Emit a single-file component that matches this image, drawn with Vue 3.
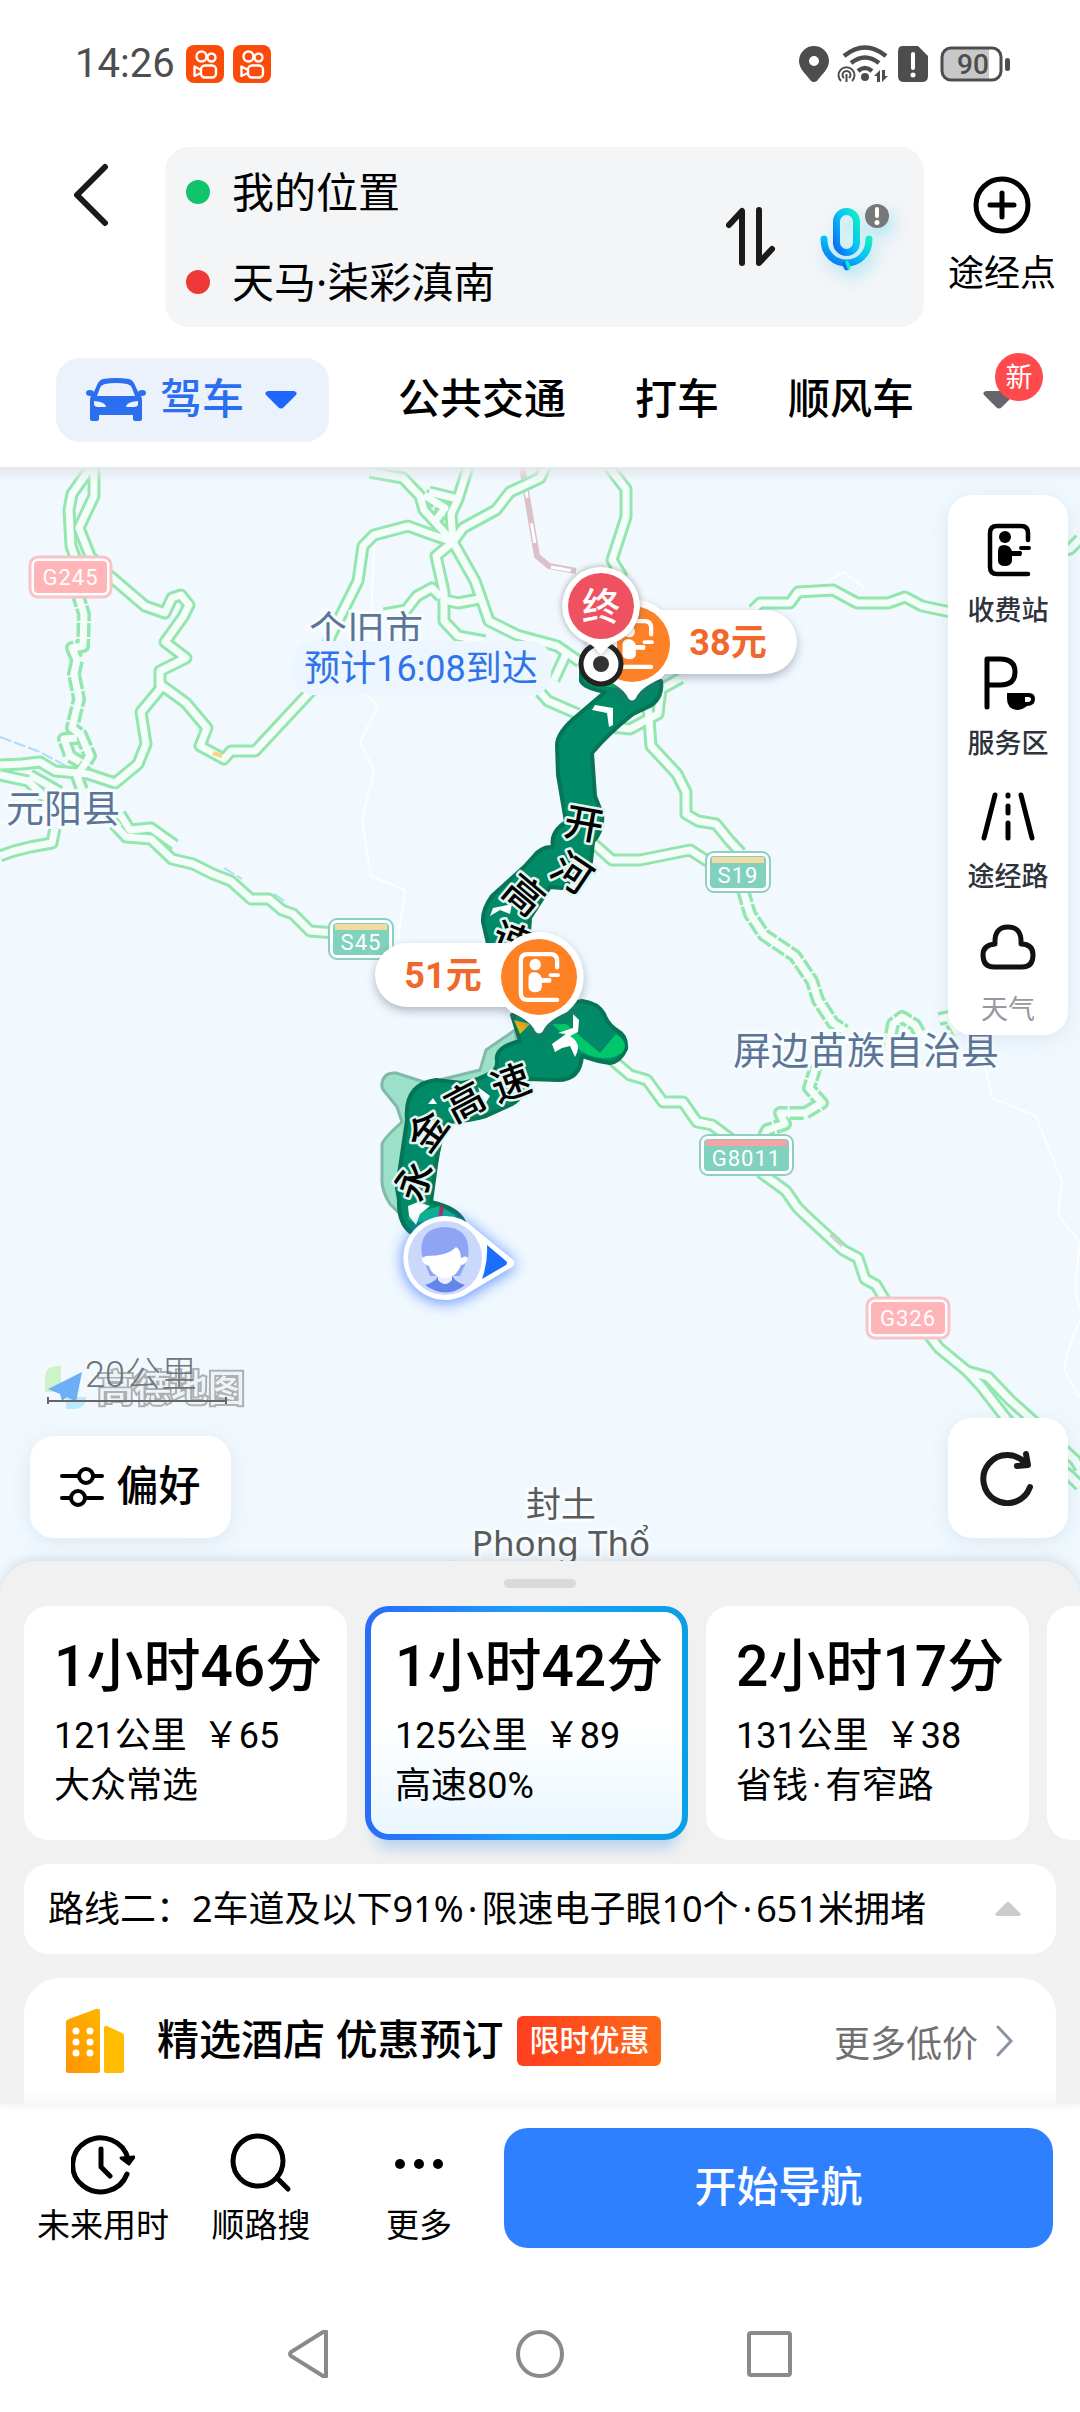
<template>
  <div class="page">
    <header class="top">
      <div class="status">
        <span class="clock">14:26</span>
        <svg v-for="n in 2" :key="n" class="app-badge" viewBox="0 0 38 38">
          <rect width="38" height="38" rx="8" fill="#fb4b0b" />
          <g fill="none" stroke="#fff" stroke-width="2.4">
            <circle cx="15.5" cy="11.5" r="5" />
            <circle cx="25.5" cy="12.5" r="4" />
            <rect x="15" y="20.500" width="15" height="12" rx="4" />
            <path d="M15 25 L8.500 21.500 V31 L15 28" stroke-linejoin="round" />
          </g>
        </svg>
        <svg class="system" viewBox="0 0 214 38">
          <g fill="#4d4d4d">
            <path fill-rule="evenodd" d="M16 1 A15 15 0 0 1 31 16 C31 24 24 29 19 36 Q16 38 13 36 C8 29 1 24 1 16 A15 15 0 0 1 16 1 Z M16 11 A5 5 0 1 0 16 21 A5 5 0 1 0 16 11 Z" />
            <circle cx="67" cy="32" r="4" />
            <path d="M104 1 H120 L130 11 V31 Q130 37 124 37 H106 Q100 37 100 31 V7 Q100 1 104 1 Z" />
            <rect x="207" y="13" width="5" height="13" rx="2.500" />
            <path d="M76 31 L82 25 V37 H79 V31 Z M84 25 H87 V31 H90 L84 37 Z" />
          </g>
          <g fill="none" stroke="#4d4d4d" stroke-width="4.500">
            <path d="M46 11 Q67 -6 88 11" />
            <path d="M53 18 Q67 7 81 18" />
            <path d="M60 26 Q67 20 74 26" />
          </g>
          <g fill="none" stroke="#4d4d4d" stroke-width="2">
            <path d="M43 36 A8 8 0 1 1 54 36" />
            <path d="M46 33 A4 4 0 1 1 51 33" />
            <path d="M48.500 29 V37" />
          </g>
          <path d="M115 9 V23" stroke="#fff" stroke-width="4" stroke-linecap="round" />
          <circle cx="115" cy="30" r="2.500" fill="#fff" />
          <rect x="144" y="3" width="59" height="32" rx="9" fill="#fff" />
          <path d="M151 4 H191 V34 H151 Q144 34 144 27 V11 Q144 4 151 4 Z" fill="#c8c8c8" />
          <rect x="144" y="3" width="59" height="32" rx="9" fill="none" stroke="#4d4d4d" stroke-width="3" />
          <text x="175" y="29" class="battery">90</text>
        </svg>
      </div>

      <div class="search-row">
        <button class="back" aria-label="返回">
          <svg viewBox="0 0 36 64"><path d="M32 4 L4 32 L32 60" fill="none" stroke="#1a1a1a" stroke-width="6" stroke-linecap="round" stroke-linejoin="round" /></svg>
        </button>
        <div class="search-box">
          <div class="fields">
            <label class="field">
              <span class="dot start"></span>
              <input v-model="from" type="text" aria-label="起点" />
            </label>
            <label class="field">
              <span class="dot end"></span>
              <input v-model="to" type="text" aria-label="终点" />
            </label>
          </div>
          <button class="swap" aria-label="交换起终点" @click="swap">
            <svg viewBox="0 0 50 60"><path d="M3 18 L16 4 V56 M33 3 V56 L46 42" fill="none" stroke="#1a1a1a" stroke-width="6" stroke-linecap="round" stroke-linejoin="round" /></svg>
          </button>
          <button class="mic" aria-label="语音">
            <svg viewBox="0 -4 72 80">
              <defs>
                <linearGradient id="mic" x1="0" y1="1" x2="1" y2="0">
                  <stop offset="0" stop-color="#0a6cf5" />
                  <stop offset=".55" stop-color="#05c4f5" />
                  <stop offset="1" stop-color="#12eec2" />
                </linearGradient>
              </defs>
              <g fill="none" stroke="url(#mic)" stroke-width="7" stroke-linecap="round">
                <rect x="16.500" y="10.500" width="20" height="41" rx="10" />
                <path d="M4 38 C4 70 49 70 49 38" />
                <path d="M26 63 L27 66" />
              </g>
              <circle cx="57" cy="15" r="12" fill="#777" />
              <path d="M57 8 V15" stroke="#fff" stroke-width="4" stroke-linecap="round" />
              <circle cx="57" cy="21.500" r="2.500" fill="#fff" />
            </svg>
          </button>
        </div>
        <button class="via">
          <svg viewBox="0 0 60 60" fill="none" stroke="#000" stroke-width="5" stroke-linecap="round">
            <circle cx="30" cy="30" r="26" />
            <path d="M18 30 H42 M30 18 V42" />
          </svg>
          <span>途经点</span>
        </button>
      </div>

      <nav class="tabs">
        <button class="tab active">
          <svg class="car" viewBox="0 0 60 44">
            <path fill="#2b6ff0" fill-rule="evenodd" d="M17 1 Q30 -1 43 1 Q47 2 49 7 L53 16 Q56 18 56 22 V41 Q56 43 54 43 H49 Q47 43 47 41 V37 H13 V41 Q13 43 11 43 H6 Q4 43 4 41 V22 Q4 18 7 16 L11 7 Q13 2 17 1 Z M19 6 Q15 7 14 10 L11 18 H49 L46 10 Q45 7 41 6 Q30 4 19 6 Z M8 23 V26 Q8 29 12 29 H20 Q20 24 8 23 Z M52 23 Q40 24 40 29 H48 Q52 29 52 26 Z" />
            <ellipse cx="4" cy="15" rx="4" ry="3" fill="#2b6ff0" />
            <ellipse cx="56" cy="15" rx="4" ry="3" fill="#2b6ff0" />
          </svg>
          <span>驾车</span>
          <svg class="caret" viewBox="0 0 32 18"><path d="M3 0 H29 Q33 1 31 4 L19 16 Q16 19 13 16 L1 4 Q-1 1 3 0 Z" fill="#1f66ff" /></svg>
        </button>
        <button v-for="tab in tabs" :key="tab" class="tab">{{ tab }}</button>
        <button class="tab more-tabs" aria-label="更多方式">
          <svg class="caret" viewBox="0 0 32 18"><path d="M3 0 H29 Q33 1 31 4 L19 16 Q16 19 13 16 L1 4 Q-1 1 3 0 Z" fill="#65656c" /></svg>
          <span class="new">新</span>
        </button>
      </nav>
    </header>

    <main class="map">
      <svg class="canvas" viewBox="0 467 1080 1130" preserveAspectRatio="xMidYMin slice">
        <defs>
          <symbol id="toll" viewBox="0 0 44 54">
            <path d="M41 17 V10 Q41 3 34 3 H10 Q3 3 3 10 V44 Q3 51 10 51 H41" fill="none" stroke="currentColor" stroke-width="4.500" stroke-linecap="round" />
            <circle cx="18" cy="14" r="6" fill="currentColor" />
            <path d="M17 22 Q23 22 25 28 H34 Q36 30 34 33 H25 V38 Q24 43 18 43 Q11 43 11 37 V28 Q11 22 17 22 Z" fill="currentColor" />
            <path d="M34 25 H42" stroke="currentColor" stroke-width="4" stroke-linecap="round" />
          </symbol>
          <linearGradient id="header-shade" x1="0" y1="0" x2="0" y2="1">
            <stop offset="0" stop-color="#e3e8ec" />
            <stop offset="1" stop-color="#e3e8ec" stop-opacity="0" />
          </linearGradient>
        </defs>
        <rect y="467" width="1080" height="1130" fill="#f1f9ff" />

        <g fill="none" stroke="#fff" stroke-width="2" opacity=".8">
          <path d="M374 540 L372 600 L368 640 M362 690 L378 706 L360 742 L374 770 L362 820 L371 876 L405 890 L398 940" />
          <path d="M986 1070 L992 1098 L1036 1116 L1062 1182 L1058 1215 L1080 1242 L1075 1290 L1080 1310 M1080 1320 L1068 1350 L1064 1370 L1080 1398" />
          <path d="M826 582 L844 572 L864 588" />
        </g>
        <path d="M0 737 L40 752 L66 766 M224 868 L242 879 M274 894 L286 902" fill="none" stroke="#b2daf7" stroke-width="2" stroke-dasharray="12 3" />
        <path d="M522 467 L537 556 L549 566 L576 571" fill="none" stroke="#dcc0ca" stroke-width="6" />
        <path d="M524 478 L537 556 M551 567 L574 571" fill="none" stroke="#fff" stroke-width="3" stroke-dasharray="20 26" />

        <g class="road casing"><path v-for="d in roads" :key="d" :d="d" /></g>
        <g class="road casing winding"><path v-for="d in windingRoads" :key="d" :d="d" /></g>
        <g class="road core"><path v-for="d in roads.concat(windingRoads)" :key="d" :d="d" /></g>
        <path d="M213 753 L222 756" stroke="#f7d487" stroke-width="4" />
        <path d="M830 1235 L842 1246" stroke="#d4cfd2" stroke-width="3" />

        <g class="place" text-anchor="middle">
          <text x="366" y="643">个旧市</text>
          <text x="63" y="822">元阳县</text>
          <text x="866" y="1064">屏边苗族自治县</text>
        </g>
        <g class="place foreign" text-anchor="middle">
          <text x="561" y="1517">封土</text>
          <text x="561" y="1556">Phong Thổ</text>
        </g>
        <path d="M434 1569 L446 1565 L452 1562" stroke="#8be0a7" stroke-width="4" fill="none" />

        <g v-for="sign in signs" :key="sign.name" :class="['sign', sign.kind]">
          <rect class="plate" :x="sign.x" :y="sign.y" :width="sign.w" height="40" rx="8" />
          <rect class="rim" :x="sign.x + 4" :y="sign.y + 4" :width="sign.w - 8" height="32" rx="4" />
          <rect v-if="sign.kind !== 'national'" class="band" :x="sign.x + 6" :y="sign.y + 5" :width="sign.w - 12" height="6" />
          <text :x="sign.x + sign.w / 2" :y="sign.y + (sign.kind === 'national' ? 28 : 31)" text-anchor="middle">{{ sign.name }}</text>
        </g>

        <path class="alt-route" d="M382 1083 Q384 1072 396 1073 L427 1083 L480 1070 L486 1050 L515 1030 L520 1060 L440 1130 L400 1214 L390 1204 Q381 1190 382 1178 V1144 Q384 1138 402 1122 L397 1107 L385 1092 Q381 1088 382 1083 Z" />
        <path class="route" d="M581 671 L581 681 Q584 688 605 692 L578 715 Q557 732 557 745 L558 775 L566 822 Q550 832 553 847 Q542 846 534 856 L524 867 L492 896 Q482 910 483 922 L489 948 H528 L530 918 L550 887 L562 888 L591 862 L593 842 Q604 830 602 814 L595 796 L592 753 Q610 732 633 714 L650 706 Q663 698 661 681 Z" />
        <path class="route" d="M512 1015 L582 1001 Q598 1003 604 1014 Q608 1025 618 1031 Q627 1036 626 1049 Q620 1062 610 1063 Q598 1062 582 1056 Q580 1080 558 1080 L527 1079 Q524 1100 508 1106 L486 1116 Q470 1121 447 1122 Q440 1138 436 1165 L431 1202 Q458 1208 464 1222 L470 1240 L410 1232 Q398 1222 399 1200 L397 1188 L407 1120 Q404 1084 436 1080 L462 1083 Q480 1080 490 1073 Q498 1070 497 1060 Q495 1047 520 1041 Z" />
        <path d="M514 1020 L530 1024 L520 1034 Z" fill="#e6b414" />
        <path d="M552 1024 L566 1024 L600 1053 L616 1034 Q630 1043 622 1053 Q606 1064 582 1052 Z" fill="#00c76b" />
        <path d="M584 680 L600 686 L618 688 L600 676 Z" fill="#04c454" />
        <path d="M407 1218 L420 1212 L440 1206 L456 1216 L452 1222 H412 Z" fill="#07b982" />
        <path d="M442 1206 L440 1218" stroke="#b5265f" stroke-width="4" />
        <g fill="#fff">
          <path d="M595 705 L613 708 L613 725 L609 727 L607 713 L592 710 Z" />
          <path d="M573 1014 L579 1020 L578 1032 L570 1036 Q583 1044 575 1057 L570 1046 L562 1048 L555 1052 L552 1044 L566 1034 L558 1033 L573 1028 Z" />
          <path d="M408 1206 L418 1202 L430 1206 L420 1214 L416 1225 L409 1216 Z" />
          <path d="M493 908 L512 904 L510 914 L500 910 L490 916 Z" />
          <path d="M478 1087 L490 1096 L484 1106 Z" />
          <path d="M428 1104 L437 1104 L433 1098 Z" />
        </g>

        <g class="road-name">
          <text
            v-for="(c, i) in roadName"
            :key="i"
            :transform="`translate(${c.x} ${c.y}) rotate(${c.angle})`"
            text-anchor="middle"
            dy="14"
          >{{ c.char }}</text>
        </g>

        <g class="eta">
          <rect x="293" y="641" width="258" height="54" rx="20" />
          <text x="421" y="681" text-anchor="middle">预计16:08到达</text>
        </g>

        <g class="bubble">
          <rect x="604" y="610" width="193" height="64" rx="32" />
          <path d="M632 599 A45 45 0 0 1 660 679 Q640 688 636 698 Q632 703 628 698 Q624 688 604 679 A45 45 0 0 1 632 599 Z" />
        </g>
        <circle cx="632" cy="644" r="38" fill="#fe8126" />
        <use href="#toll" x="612" y="618" width="42" height="52" class="toll-glyph" />
        <text x="728" y="655" text-anchor="middle" class="fee">38元</text>

        <g class="bubble">
          <rect x="375" y="943" width="180" height="64" rx="32" />
          <path d="M539 932 A45 45 0 0 1 567 1012 Q547 1021 543 1031 Q539 1036 535 1031 Q531 1021 511 1012 A45 45 0 0 1 539 932 Z" />
        </g>
        <circle cx="539" cy="977" r="38" fill="#fe8126" />
        <use href="#toll" x="518" y="951" width="42" height="52" class="toll-glyph" />
        <text x="443" y="988" text-anchor="middle" class="fee">51元</text>

        <circle cx="601" cy="664" r="20" fill="#fff" stroke="#222" stroke-width="5" />
        <circle cx="601" cy="664" r="8" fill="#333" />
        <path class="pin" d="M601 567 A39 39 0 0 1 620 640 Q608 645 604 652 Q601 656 598 652 Q594 645 582 640 A39 39 0 0 1 601 567 Z" />
        <circle cx="601" cy="606" r="33" fill="#ee5261" />
        <text x="601" y="620" text-anchor="middle" class="pin-text">终</text>

        <g class="me">
          <path d="M445 1216 Q462 1216 474 1228 L512 1259 Q517 1263 512 1267 L470 1292 A42 42 0 1 1 445 1216 Z" />
        </g>
        <path d="M487 1245 L506 1261 Q508 1263 506 1265 L482 1279 Q488 1262 487 1245 Z" fill="#1b6dfb" />
        <circle cx="445" cy="1258" r="37" fill="#cad8fb" />
        <path d="M422 1255 Q418 1228 445 1227 Q472 1228 468 1258 L460 1276 H430 Z" fill="#8fa4f5" />
        <path d="M425 1285 Q440 1280 438 1273 H452 Q452 1281 465 1285 Q446 1300 425 1285 Z" fill="#6486e8" />
        <path d="M438 1270 H452 V1280 Q445 1288 438 1280 Z" fill="#e8effe" />
        <path d="M426 1256 Q448 1256 456 1247 Q461 1250 461 1258 Q466 1255 468 1258 Q466 1265 461 1265 Q456 1278 445 1278 Q432 1277 429 1266 Q422 1264 422 1258 Z" fill="#fff" />

        <g opacity=".65">
          <path d="M58 1366 H61 V1392 H45 V1378 Q45 1366 58 1366 Z" fill="#bdf0ab" />
          <path d="M66 1397 H86 Q86 1409 74 1409 H66 Z" fill="#a2e1ff" />
          <path d="M82 1372 L48 1389 L60 1394 L62 1401 L67 1397 L76 1402 Z" fill="#2688f0" />
        </g>
        <text x="97" y="1402" class="watermark">高德地图</text>
        <text x="85" y="1387" class="scale">20公里</text>
        <path d="M48 1397 V1404 M48 1401 H226 M226 1397 V1404" stroke="#666" stroke-width="2" />
        <rect y="467" width="1080" height="16" fill="url(#header-shade)" />
      </svg>

      <div class="tools">
        <button class="tool">
          <svg viewBox="0 0 56 56"><use href="#toll" x="7" y="1" width="44" height="54" /></svg>
          <span>收费站</span>
        </button>
        <button class="tool">
          <svg viewBox="0 0 56 56">
            <path d="M7 52 V4 H20 Q35 4 35 17 Q35 30 20 30 H7" fill="none" stroke="#000" stroke-width="5" stroke-linecap="round" stroke-linejoin="round" />
            <path fill-rule="evenodd" d="M27 38 H49 Q55 38 55 44 Q55 51 47 51 Q42 55 37 55 Q27 54 27 44 Z M45 42 V47 H48 Q51 47 51 44 Q51 42 48 42 Z" />
          </svg>
          <span>服务区</span>
        </button>
        <button class="tool">
          <svg viewBox="0 0 56 56" fill="none" stroke="#000" stroke-width="5" stroke-linecap="round">
            <path d="M15 7 L4 50 M41 7 L52 50 M28 7 V8 M28 18 V25 M28 35 V50" />
          </svg>
          <span>途经路</span>
        </button>
        <button class="tool faded">
          <svg viewBox="0 2 56 56">
            <path d="M15 25 Q14 8 28 8 Q42 8 41 25 Q53 25 53 36 Q53 48 42 48 H14 Q3 48 3 36 Q3 26 15 25 Z" fill="none" stroke="#111" stroke-width="5" stroke-linejoin="round" />
          </svg>
          <span>天气</span>
        </button>
      </div>

      <button class="prefer">
        <svg viewBox="0 0 44 42" fill="none" stroke="#000" stroke-width="4" stroke-linecap="round">
          <path d="M2 10 H18 M34 10 H42 M2 32 H10 M26 32 H42" />
          <circle cx="26" cy="10" r="7" />
          <circle cx="18" cy="32" r="7" />
        </svg>
        <span>偏好</span>
      </button>
      <button class="refresh" aria-label="刷新">
        <svg viewBox="0 0 56 56" fill="none" stroke="#1a1a1a" stroke-width="6" stroke-linecap="round" stroke-linejoin="round">
          <path d="M50 37 A24 24 0 1 1 46 14 M46 4 L48 15 L37 16" />
        </svg>
      </button>
    </main>

    <section class="sheet">
      <div class="handle"></div>
      <div class="routes">
        <button
          v-for="(route, i) in routes"
          :key="i"
          :class="['card', { selected: i === selected }]"
          :aria-label="route.time ? null : '更多路线'"
          @click="selected = i"
        >
          <strong>{{ route.time }}</strong>
          <span class="cost">
            <span>{{ route.distance }}</span>
            <span>{{ route.toll }}</span>
          </span>
          <span>
            <template v-for="(note, j) in route.notes" :key="note"><i v-if="j" class="sep">·</i>{{ note }}</template>
          </span>
        </button>
      </div>
      <button class="summary">
        <span>路线二：<template v-for="(fact, j) in facts" :key="fact"><i v-if="j" class="sep">·</i>{{ fact }}</template></span>
        <svg viewBox="0 0 26 14"><path d="M2 14 Q-1 13 1 11 L11 1 Q13 -1 15 1 L25 11 Q27 13 24 14 Z" fill="#ccc" /></svg>
      </button>
      <div class="hotel">
        <svg class="building" viewBox="0 0 58 66">
          <defs>
            <linearGradient id="tower" x1="1" y1="0" x2="0" y2="1">
              <stop offset="0" stop-color="#ffb400" />
              <stop offset="1" stop-color="#ff9500" />
            </linearGradient>
          </defs>
          <path d="M3 11 L30 1 Q34 0 34 3 V63 Q34 65 32 65 H3 Q0 65 0 63 V14 Q0 12 3 11 Z" fill="url(#tower)" />
          <path d="M38 20 Q38 17 41 18 L56 25 Q58 26 58 28 V63 Q58 65 56 65 H40 Q38 65 38 63 Z" fill="#ffbc00" />
          <g fill="#fff">
            <circle v-for="n in 6" :key="n" :cx="n % 2 ? 10 : 24" :cy="23 + Math.floor((n - 1) / 2) * 11" r="3.500" />
          </g>
        </svg>
        <h2>精选酒店 优惠预订</h2>
        <span class="tag">限时优惠</span>
        <a href="#">
          更多低价
          <svg viewBox="0 0 18 32"><path d="M2 2 L15 16 L2 30" fill="none" stroke="#8a94a3" stroke-width="3" stroke-linecap="round" /></svg>
        </a>
      </div>
    </section>

    <footer class="bottom">
      <div class="actions">
        <button class="action">
          <svg viewBox="0 0 64 64" fill="none" stroke="#000" stroke-width="5" stroke-linecap="round" stroke-linejoin="round">
            <path d="M56 42 A28 27 0 1 1 57 27 M30 17 V35 L39 44" />
            <path d="M50 26 L58 32 L63 25 Z" fill="#000" stroke-width="3" />
          </svg>
          <span>未来用时</span>
        </button>
        <button class="action">
          <svg viewBox="0 0 64 64" fill="none" stroke="#000" stroke-width="5" stroke-linecap="round">
            <circle cx="29" cy="29" r="25" />
            <path d="M48 46 L59 57" />
          </svg>
          <span>顺路搜</span>
        </button>
        <button class="action">
          <svg viewBox="0 0 64 64"><circle cx="13" cy="32" r="5" /><circle cx="32" cy="32" r="5" /><circle cx="51" cy="32" r="5" /></svg>
          <span>更多</span>
        </button>
        <button class="start-nav">开始导航</button>
      </div>
      <div class="system-nav">
        <svg viewBox="0 0 48 48"><path d="M40 2 V46 Q40 48 37 46 L5 26 Q3 24 5 22 L37 2 Q40 0 40 2 Z" /></svg>
        <svg viewBox="0 0 48 48"><circle cx="24" cy="24" r="22" /></svg>
        <svg viewBox="0 0 48 48"><rect x="3" y="3" width="41" height="42" rx="2" /></svg>
      </div>
    </footer>
  </div>
</template>

<script setup>
import { ref } from 'vue'

const from = ref('我的位置')
const to = ref('天马·柒彩滇南')
const selected = ref(1)

const swap = () => {
  const start = from.value
  from.value = to.value
  to.value = start
}

const tabs = ['公共交通', '打车', '顺风车']

const routes = [
  { time: '1小时46分', distance: '121公里', toll: '￥65', notes: ['大众常选'] },
  { time: '1小时42分', distance: '125公里', toll: '￥89', notes: ['高速80%'] },
  { time: '2小时17分', distance: '131公里', toll: '￥38', notes: ['省钱', '有窄路'] },
  { time: '', distance: '', toll: '', notes: [] }
]

const facts = ['2车道及以下91%', '限速电子眼10个', '651米拥堵']

const signs = [
  { name: 'G245', kind: 'national', x: 30, y: 557, w: 81 },
  { name: 'S45', kind: 'province', x: 329, y: 919, w: 64 },
  { name: 'S19', kind: 'province', x: 706, y: 852, w: 64 },
  { name: 'G8011', kind: 'express', x: 700, y: 1135, w: 93 },
  { name: 'G326', kind: 'national', x: 867, y: 1298, w: 82 }
]

const roadName = [
  { char: '开', x: 584, y: 824, angle: 10 },
  { char: '河', x: 572, y: 873, angle: 34 },
  { char: '高', x: 524, y: 895, angle: 40 },
  { char: '速', x: 512, y: 941, angle: 22 },
  { char: '永', x: 414, y: 1181, angle: -72 },
  { char: '金', x: 428, y: 1131, angle: -54 },
  { char: '高', x: 465, y: 1102, angle: -28 },
  { char: '速', x: 511, y: 1083, angle: -20 }
]

const roads = [
  'M91 467 L72 494 L69 510 L71 546 L76 560',
  'M94 467 L94 496 L79 528 L90 556 L110 576 L145 606 L165 613 L172 598 L181 595 L189 605 L183 617 L165 642 L186 658 L160 671 L160 689 L141 712 L146 744 L138 764 L115 783 L88 774 L55 771 L40 762 L22 764 L0 765',
  'M160 684 L186 703 L207 728 L200 746 L224 759 L231 751 L255 751 L310 692 L331 635 L358 581 L363 546 L374 535 L408 526 L427 533 L453 542',
  'M453 542 L424 510 L420 496 L403 478 L370 472',
  'M468 467 L458 499 L429 492 M458 499 L451 514 L453 542',
  'M453 542 L463 528 L496 510 L510 492 L540 478 L545 467',
  'M453 542 L436 556 L444 592 L444 621 L458 636 L485 641',
  'M453 542 L475 581 L489 621 L517 635 L535 640 L557 646 L580 662',
  'M441 599 L458 603 L479 599 M441 597 L432 588 L417 596 L406 610 L384 614',
  'M609 467 L626 489 L626 517 L612 560 L623 578',
  'M753 610 L760 603 L790 603 L798 592 L833 590 L857 603 L888 603 L905 597 L922 606 L960 614',
  'M1060 552 L1070 549 L1080 539',
  'M540 692 L548 701 L578 714 M612 727 L630 729 L658 714 L661 689 L681 678',
  'M554 680 L566 654',
  'M648 706 L651 746 L677 774 L686 792 L686 814 L698 821 L716 824 L729 840 L741 853',
  'M593 843 L612 860 L640 860 L690 850 L712 864',
  'M610 1058 L630 1075 L647 1080 L663 1102 L683 1102 L697 1122 L712 1125 L735 1142',
  'M760 1172 L786 1191 L797 1207 L805 1215 L843 1250 L858 1258 L865 1279 L876 1285 L888 1305 M925 1330 L939 1348 L967 1371 L981 1386 L1005 1417 L1030 1445 L1070 1476 L1080 1486',
  'M967 1371 L988 1377 L1010 1400 L1029 1417 L1075 1460 L1080 1468',
  'M114 824 L126 837 L151 839 L172 859 L193 864 L213 874 L231 881 L251 899 L269 899 L282 910 L293 914 L310 931 L335 933',
  'M120 814 L130 830 L151 828 L175 845',
  'M0 775 L28 781 L48 800 L60 815 M30 775 L60 792',
  'M0 856 L14 851 L30 847 L52 843 L55 828'
]

const windingRoads = [
  'M77 592 L84 614 L83 646 L72 648 L77 660 L74 674 L79 699 L72 728 L81 735 L90 756 L77 776 L82 790',
  'M77 738 L64 739 L70 756 L80 762',
  'M424 495 L445 508 L436 520',
  'M743 890 L750 914 L764 935 L795 956 L812 981 L818 1000 L833 1023 L845 1031',
  'M816 1066 L809 1088 L822 1103 L805 1113 L780 1113 L785 1124 L767 1130 L762 1140',
  'M888 1050 L893 1024 L902 1017 L915 1025 L920 1034 M939 1019 L948 1017 L958 1034'
]
</script>

<style>
body {
  margin: 0;
  background: #fff;
}
</style>

<style scoped>
.page {
  display: flex;
  flex-direction: column;
  min-height: 100vh;
  color: #000;
  background: #fff;
  font-family: Roboto, "Noto Sans CJK SC", sans-serif;
}

button,
input {
  margin: 0;
  padding: 0;
  border: none;
  background: none;
  color: inherit;
  font-family: inherit;
}

button {
  cursor: pointer;
}

svg {
  display: block;
}

.top {
  padding-bottom: 25px;
}

.status {
  display: flex;
  align-items: center;
  gap: 9px;
  height: 38px;
  padding: 45px 68px 0 75px;
}

.clock {
  margin-right: 2px;
  color: #4d4d4d;
  font-size: 40px;
  line-height: 38px;
}

.app-badge {
  width: 38px;
  height: 38px;
}

.system {
  width: 214px;
  height: 38px;
  margin-left: auto;
}

.battery {
  fill: #4d4d4d;
  font-size: 28px;
  font-weight: 500;
  text-anchor: middle;
}

.search-row {
  display: flex;
  align-items: center;
  margin-top: 64px;
}

.back {
  flex: none;
  align-self: flex-start;
  width: 165px;
  height: 96px;
}

.back svg {
  width: 36px;
  height: 64px;
  margin-left: 73px;
}

.search-box {
  display: flex;
  flex: 1;
  align-items: center;
  min-width: 0;
  padding-right: 32px;
  border-radius: 24px;
  background: #f3f5f7;
}

.fields {
  flex: 1;
  min-width: 0;
}

.field {
  display: flex;
  align-items: center;
  gap: 22px;
  height: 90px;
  padding-left: 21px;
}

.field input {
  flex: 1;
  min-width: 0;
  font-family: "Noto Sans", "Noto Sans CJK SC", sans-serif;
  font-size: 42px;
  line-height: 60px;
}

.dot {
  width: 24px;
  height: 24px;
  border-radius: 50%;
}

.dot.start {
  background: #0fc46c;
}

.dot.end {
  background: #f03838;
}

.swap svg {
  width: 50px;
  height: 60px;
}

.mic {
  margin-left: 44px;
}

.mic svg {
  width: 72px;
  height: 80px;
  filter: drop-shadow(4px 8px 8px rgba(0, 190, 240, 0.3));
}

.via {
  display: flex;
  flex: none;
  flex-direction: column;
  align-items: center;
  gap: 14px;
  width: 156px;
  font-size: 36px;
  line-height: 50px;
}

.via svg {
  width: 60px;
  height: 60px;
}

.tabs {
  display: flex;
  align-items: center;
  gap: 69px;
  margin-top: 31px;
  padding-left: 56px;
}

.tab {
  font-size: 42px;
  font-weight: 500;
  line-height: 60px;
  white-space: nowrap;
}

.tab.active {
  display: flex;
  align-items: center;
  gap: 14px;
  height: 84px;
  padding: 0 32px 0 30px;
  border-radius: 24px;
  color: #2b6ff0;
  background: #ecf2fc;
}

.car {
  width: 60px;
  height: 44px;
}

.caret {
  width: 32px;
  height: 18px;
}

.tab.active .caret {
  margin-left: 7px;
}

.more-tabs {
  position: relative;
}

.new {
  position: absolute;
  top: -38px;
  left: 12px;
  width: 48px;
  height: 48px;
  border-radius: 50%;
  color: #fff;
  background: #ff4a4d;
  font-size: 27px;
  font-weight: 400;
  line-height: 50px;
}

.map {
  position: relative;
  flex: 1;
  min-height: 1130px;
}

.canvas {
  position: absolute;
  inset: 0;
  width: 100%;
  height: 100%;
}

.road {
  fill: none;
  stroke-linejoin: round;
}

.casing {
  stroke: #93e6ae;
  stroke-width: 13px;
}

.winding {
  stroke-width: 14px;
  stroke-dasharray: 14px 2px;
}

.core {
  stroke: #f4fdfa;
  stroke-width: 7px;
}

.place {
  fill: #5c7597;
  stroke: #f7fcff;
  stroke-width: 6px;
  paint-order: stroke;
  font-size: 38px;
}

.foreign {
  fill: #5a5a5a;
  font-family: "Noto Sans", "Noto Sans CJK SC", sans-serif;
  font-size: 35px;
}

.sign text {
  fill: #fff;
  font-size: 22px;
  letter-spacing: 1px;
}

.plate {
  fill: #fff;
  stroke: #8fcfc0;
  stroke-width: 2px;
}

.rim {
  fill: #80d1be;
}

.province .band {
  fill: #f1dba3;
}

.express .band {
  fill: #f9a2a6;
}

.national .plate {
  stroke: #f7c3c8;
  stroke-width: 3px;
}

.national .rim {
  fill: #ffb5b7;
}

.route {
  fill: #008a67;
  stroke: #057555;
  stroke-width: 4px;
  stroke-linejoin: round;
}

.alt-route {
  fill: #9be0c8;
  stroke: #83b9a9;
  stroke-width: 3px;
  stroke-linejoin: round;
}

.road-name {
  fill: #000;
  stroke: #e3f5ee;
  stroke-width: 5px;
  stroke-linejoin: round;
  paint-order: stroke;
  font-size: 39px;
  font-weight: 500;
}

.eta rect {
  fill: #edf5fe;
}

.eta text {
  fill: #2f74e8;
  font-size: 36px;
}

.bubble {
  fill: #fff;
  filter: drop-shadow(0 4px 5px rgba(80, 90, 110, 0.4));
}

.toll-glyph {
  color: #fff;
}

.fee {
  fill: #f0682b;
  font-size: 36px;
  font-weight: 700;
}

.pin {
  fill: #fff;
  filter: drop-shadow(0 0 3px rgba(80, 80, 80, 0.5));
}

.pin-text {
  fill: #fff;
  font-size: 38px;
  font-weight: 500;
}

.me {
  fill: #fff;
  filter: drop-shadow(0 2px 8px rgba(50, 110, 255, 0.8));
}

.watermark {
  fill: #eef2f5;
  stroke: #9b9fa3;
  stroke-width: 4px;
  paint-order: stroke;
  font-size: 37px;
  font-weight: 500;
  opacity: 0.8;
}

.scale {
  fill: #70757a;
  font-size: 36px;
  font-weight: 300;
}

.tools {
  position: absolute;
  top: 28px;
  right: 12px;
  display: flex;
  flex-direction: column;
  gap: 28px;
  width: 120px;
  padding: 27px 0 9px;
  border-radius: 24px;
  background: #fff;
  box-shadow: 0 4px 20px rgba(80, 100, 120, 0.12);
}

.tool {
  display: flex;
  flex-direction: column;
  align-items: center;
  gap: 17px;
  color: #000;
  font-size: 27px;
  line-height: 32px;
}

.tool svg {
  width: 56px;
  height: 56px;
}

.tool span {
  color: #2e323b;
  font-weight: 500;
}

.tool.faded span {
  color: #96999f;
  font-weight: 400;
}

.prefer,
.refresh {
  position: absolute;
  bottom: 59px;
  display: flex;
  align-items: center;
  justify-content: center;
  border-radius: 24px;
  background: #fff;
  box-shadow: 0 4px 20px rgba(80, 100, 120, 0.12);
}

.prefer {
  left: 30px;
  gap: 12px;
  width: 201px;
  height: 102px;
  font-size: 42px;
  font-weight: 500;
  line-height: 50px;
}

.prefer svg {
  width: 44px;
  height: 42px;
}

.refresh {
  right: 12px;
  width: 120px;
  height: 120px;
}

.refresh svg {
  width: 56px;
  height: 56px;
}

.sheet {
  position: relative;
  overflow: hidden;
  margin-top: -36px;
  padding: 18px 24px 0;
  border-radius: 36px 36px 0 0;
  background: #f1f1f1;
  box-shadow: 0 -2px 12px rgba(80, 100, 120, 0.2);
}

.handle {
  width: 72px;
  height: 9px;
  margin: 0 auto 18px;
  border-radius: 5px;
  background: #dadada;
}

.routes {
  display: flex;
  gap: 18px;
}

.card {
  display: flex;
  flex: 0 0 323px;
  flex-direction: column;
  box-sizing: border-box;
  height: 234px;
  padding: 20px 0 0 24px;
  border: 6px solid #fff;
  border-radius: 24px;
  background: #fff;
  font-size: 36px;
  line-height: 50px;
  text-align: left;
  white-space: nowrap;
}

.card.selected {
  border-color: transparent;
  background:
    linear-gradient(180deg, #fff 50%, #e9f6fe) padding-box,
    linear-gradient(90deg, #2a6cf7, #1d9efa 50%, #0a9fe6) border-box;
  box-shadow: 0 18px 14px -10px rgba(110, 170, 240, 0.45);
}

.card strong {
  margin-bottom: 9px;
  font-size: 57px;
  font-weight: 500;
  line-height: 70px;
}

.cost {
  display: flex;
  gap: 16px;
}

.sep {
  margin: 0 4px;
  font-style: normal;
}

.summary {
  display: flex;
  align-items: center;
  justify-content: space-between;
  width: 100%;
  height: 90px;
  margin-top: 24px;
  padding: 0 35px 0 24px;
  border-radius: 24px;
  background: #fff;
  font-family: "Noto Sans", "Noto Sans CJK SC", sans-serif;
  font-size: 36px;
  line-height: 50px;
}

.summary svg {
  width: 26px;
  height: 14px;
}

.hotel {
  display: flex;
  align-items: center;
  height: 126px;
  margin-top: 24px;
  padding: 0 42px;
  border-radius: 36px 36px 0 0;
  background: linear-gradient(#fff 90%, #f9f9f9);
}

.building {
  width: 58px;
  height: 66px;
}

.hotel h2 {
  margin: 0 14px 0 33px;
  font-size: 42px;
  font-weight: 500;
  line-height: 50px;
}

.tag {
  padding: 0 12px;
  border-radius: 6px;
  color: #fff;
  background: linear-gradient(90deg, #ff3e1e, #ff6a1a);
  font-size: 30px;
  font-weight: 500;
  line-height: 50px;
}

.hotel a {
  display: flex;
  align-items: center;
  gap: 18px;
  margin-left: auto;
  color: #707070;
  font-size: 36px;
  text-decoration: none;
}

.hotel a svg {
  width: 18px;
  height: 32px;
}

.bottom {
  padding: 24px 0 34px;
  background: #fff;
}

.actions {
  display: flex;
  align-items: flex-end;
  padding: 0 27px 0 24px;
}

.action {
  display: flex;
  flex: 0 0 158px;
  flex-direction: column;
  align-items: center;
  gap: 8px;
  font-size: 33px;
  line-height: 44px;
}

.action svg {
  width: 64px;
  height: 64px;
}

.start-nav {
  flex: 1;
  height: 120px;
  margin-left: 6px;
  border-radius: 24px;
  color: #fff;
  background: #2e80ff;
  font-size: 42px;
  font-weight: 500;
  line-height: 50px;
}

.system-nav {
  display: flex;
  justify-content: center;
  gap: 182px;
  margin-top: 82px;
}

.system-nav svg {
  width: 48px;
  height: 48px;
  fill: none;
  stroke: #8a8a8a;
  stroke-width: 4px;
}
</style>
